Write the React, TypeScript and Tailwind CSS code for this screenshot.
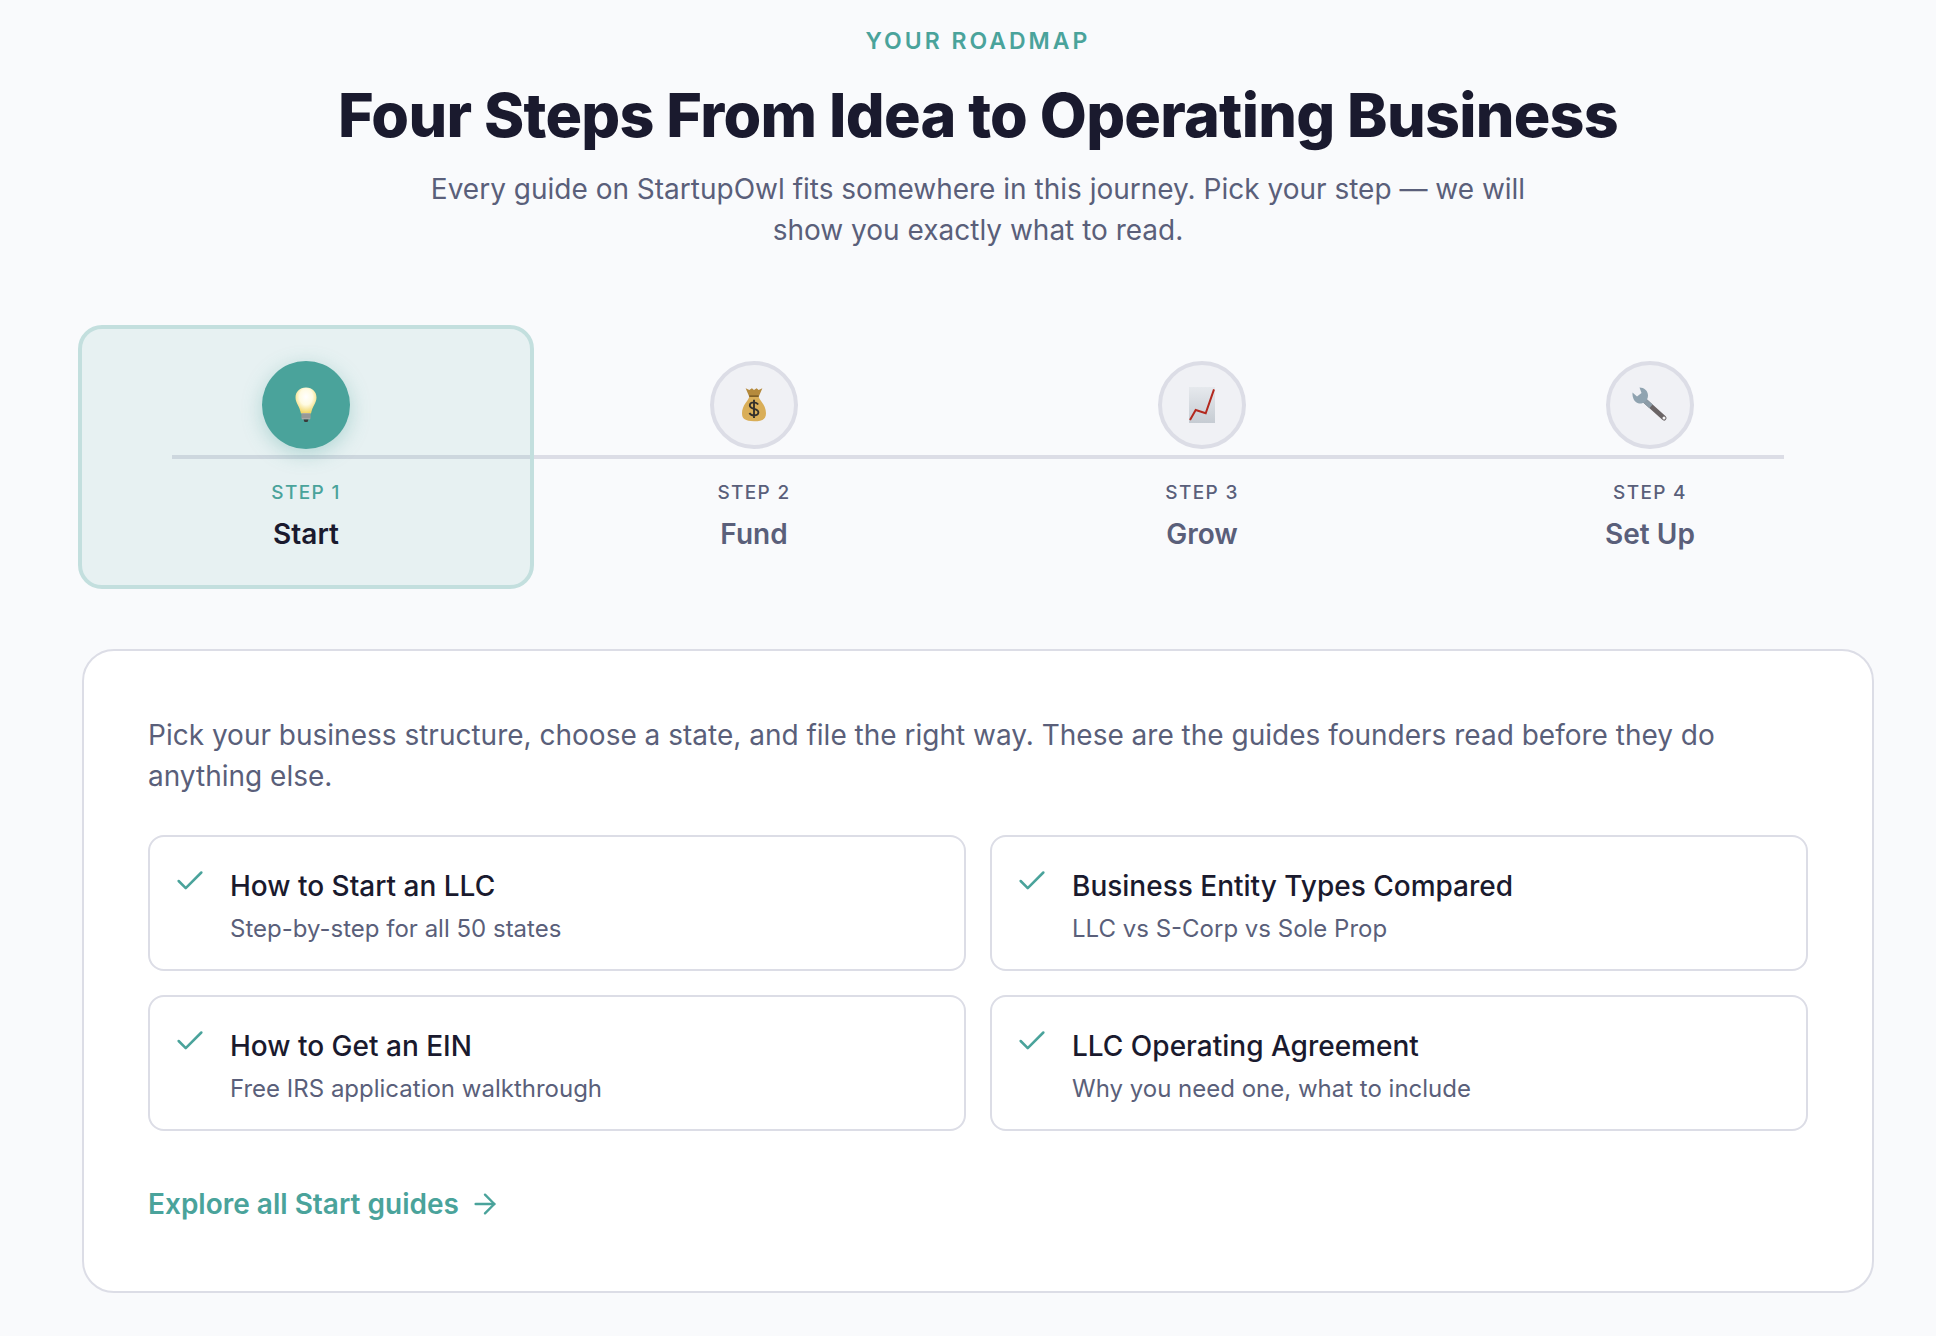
// Roadmap section: four steps with a guide panel for the active one.
import { ArrowRight, Check } from "lucide-react";

function BulbIcon() {
	return (
		<svg width="24" height="36" viewBox="0 0 24 36">
			<defs>
				<radialGradient id="bulb" cx="50%" cy="36%" r="62%">
					<stop offset="0%" stopColor="#ffffff" />
					<stop offset="50%" stopColor="#fffbe2" />
					<stop offset="100%" stopColor="#f0d668" />
				</radialGradient>
			</defs>
			<path d="M12 0.5C5.500 0.500 1.500 5 1.500 10.500c0 5.500 4 8.500 5.500 16h10c1.500-7.500 5.500-10.500 5.500-16C22.500 5 18.500 0.500 12 0.500Z" fill="url(#bulb)" />
			<rect x="7.500" y="26" width="9" height="6.500" rx="1.500" fill="#a9a9a6" />
			<path d="M7.500 28h9M7.500 30h9" stroke="#77787a" strokeWidth="0.700" />
			<path d="M9.500 32.500h5l-1 2.500h-3Z" fill="#3a3a3a" />
		</svg>
	);
}

function MoneyBagIcon() {
	return (
		<svg width="24" height="35" viewBox="0 0 23 33" className="-mt-[2px]">
			<path d="M3.500 1l3.500 1.500L9.500 1l2 1.500L14 1l2 1.500L19.500 1l-3.500 8H7Z" fill="#b58a3c" />
			<path d="M7 9h9c1 4 7 8 7 16 0 5.500-3 7.500-11.500 7.500S0 30.500 0 25c0-8 6-12 7-16Z" fill="#d9ae58" />
			<path d="M7 8.500h9" stroke="#7a5a22" strokeWidth="1.500" />
			<path d="M15.500 16.500c-1-1.500-2.500-2-4-2-2.500 0-4 1.200-4 3 0 4.200 8.200 2.300 8.200 6.500 0 1.900-1.700 3-4.200 3-1.800 0-3.400-.7-4.400-2.300M11.500 12v17.500" fill="none" stroke="#33302c" strokeWidth="1.800" />
		</svg>
	);
}

function ChartIcon() {
	return (
		<svg width="26" height="36" viewBox="0 0 26 36">
			<defs>
				<linearGradient id="chart" x1="0" y1="0" x2="0" y2="1">
					<stop offset="0%" stopColor="#e6e9ed" />
					<stop offset="100%" stopColor="#c6ccd3" />
				</linearGradient>
			</defs>
			<rect width="26" height="36" fill="url(#chart)" />
			<path d="M1 33l5.700-10 10 3.300L25 2.300" fill="none" stroke="#b3281e" strokeWidth="2" />
		</svg>
	);
}

function WrenchIcon() {
	return (
		<svg width="36" height="36" viewBox="0 0 36 36">
			<path d="M12 13l20 18" stroke="#6a6465" strokeWidth="5" strokeLinecap="round" />
			<path d="M12 13l7 6.300" stroke="#8b9ba6" strokeWidth="5" />
			<path d="M0.500 5.500L5 9.500 9.500 6 7.500 0.500C12 0.500 16 3.500 16 8.500 16 13.500 11.500 17 7 16.500 3 16 0 11 0.500 5.500Z" fill="#8fa3b0" />
			<circle cx="32" cy="31" r="1.500" fill="#f4f4f4" />
		</svg>
	);
}

const steps = [
	{ label: "STEP 1", name: "Start", icon: <BulbIcon />, active: true },
	{ label: "STEP 2", name: "Fund", icon: <MoneyBagIcon />, active: false },
	{ label: "STEP 3", name: "Grow", icon: <ChartIcon />, active: false },
	{ label: "STEP 4", name: "Set Up", icon: <WrenchIcon />, active: false },
];

const guides = [
	{ title: "How to Start an LLC", sub: "Step-by-step for all 50 states" },
	{ title: "Business Entity Types Compared", sub: "LLC vs S-Corp vs Sole Prop" },
	{ title: "How to Get an EIN", sub: "Free IRS application walkthrough" },
	{ title: "LLC Operating Agreement", sub: "Why you need one, what to include" },
];

export default function App() {
	return (
		<div className="min-h-[1336px] overflow-hidden bg-[#f9fafc] font-['Inter',sans-serif] text-[#1a1a2e]">
			<div className="ml-[82px] w-[1792px] pt-[25px]">
				<header className="flex flex-col items-center text-center">
					<p className="text-[23px] leading-[32px] font-semibold tracking-[3px] text-[#4aa39b]">YOUR ROADMAP</p>
					<h2 className="mt-[22px] text-[61px] leading-[72px] font-extrabold tracking-[-0.012em]">
						Four Steps From Idea to Operating Business
					</h2>
					<p className="mt-[18px] w-[1120px] text-[28px] leading-[41px] text-[#5a5f7a]">
						Every guide on StartupOwl fits somewhere in this journey. Pick your step — we will show you exactly what to read.
					</p>
				</header>

				<div className="relative mt-[74px] grid grid-cols-4">
					<div className="absolute top-[130px] right-[5%] left-[5%] h-[4px] bg-[#dcdde6]" />
					{steps.map((s) => (
						<div
							key={s.name}
							className={`relative -mx-[4px] flex h-[264px] flex-col items-center rounded-[24px] border-[4px] pt-[32px] ${
								s.active ? "border-[#c3dfde] bg-[#4aa39b1a]" : "border-transparent"
							}`}
						>
							<div
								className={`flex size-[88px] items-center justify-center rounded-full ${
									s.active
										? "bg-[#4aa39b] shadow-[0_5px_20px_#4aa39b59]"
										: "border-[4px] border-[#dcdde6] bg-[#f0f1f5]"
								}`}
							>
								{s.icon}
							</div>
							<p
								className={`mt-[30px] text-[19px] leading-[28px] font-medium tracking-[0.07em] ${
									s.active ? "text-[#4aa39b]" : "text-[#5a5f7a]"
								}`}
							>
								{s.label}
							</p>
							<p
								className={`mt-[7px] text-[28px] leading-[40px] font-semibold ${
									s.active ? "text-[#1a1a2e]" : "text-[#5a5f7a]"
								}`}
							>
								{s.name}
							</p>
						</div>
					))}
				</div>

				<section className="mt-[60px] h-[644px] w-[1792px] rounded-[32px] border-[2px] border-[#dcdde6] bg-white px-[64px] pt-[64px]">
					<p className="text-[28px] leading-[41px] text-[#5a5f7a]">
						Pick your business structure, choose a state, and file the right way. These are the guides founders read before they do anything else.
					</p>
					<div className="mt-[38px] grid grid-cols-2 gap-[24px]">
						{guides.map((g) => (
							<div key={g.title} className="flex h-[136px] gap-[23px] rounded-[16px] border-[2px] border-[#dcdde6] bg-white pt-[29px] pl-[23px]">
								<Check className="-mt-[2px] size-[34px] shrink-0 text-[#4aa39b]" strokeWidth={1.8} />
								<div>
									<p className="text-[28px] leading-[40px] font-medium">{g.title}</p>
									<p className="mt-[5px] text-[24px] leading-[36px] text-[#5a5f7a]">{g.sub}</p>
								</div>
							</div>
						))}
					</div>
					<a className="mt-[53px] flex items-center gap-[10px] text-[28px] leading-[40px] font-semibold text-[#4aa39b]">
						Explore all Start guides
						<ArrowRight className="size-[32px]" strokeWidth={1.8} />
					</a>
				</section>
			</div>
		</div>
	);
}
